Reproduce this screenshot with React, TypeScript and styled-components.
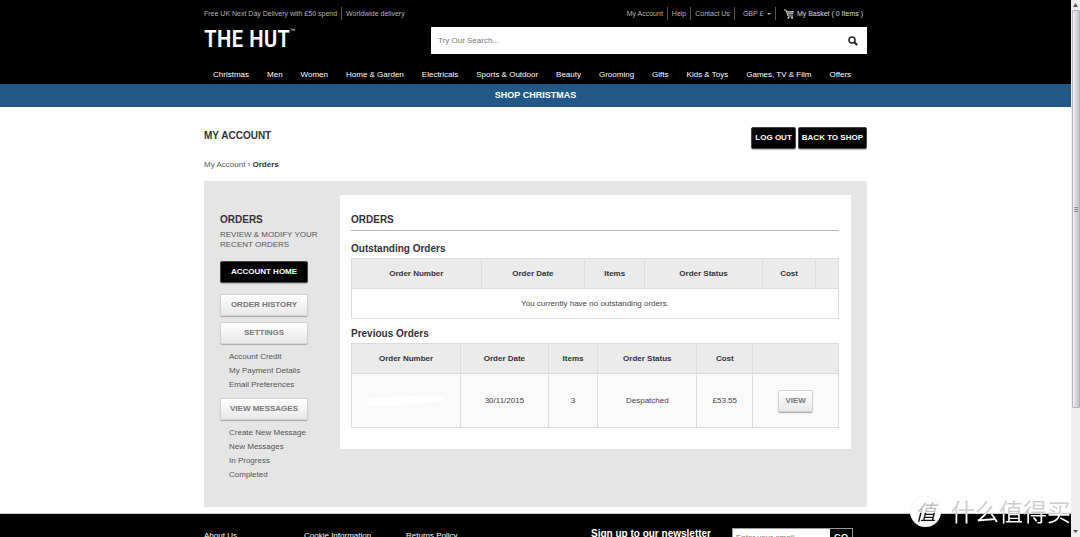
import React from "react";
import styled, { createGlobalStyle, css } from "styled-components";

const GlobalStyle = createGlobalStyle`
  * { box-sizing: border-box; }
  body {
    margin: 0;
    background: #fff;
    color: #333;
    font: 8px/12px "Liberation Sans", "Noto Sans CJK SC", sans-serif;
  }
  a { color: inherit; text-decoration: none; }
  h1, h2, h3, p, ul { margin: 0; padding: 0; }
  ul { list-style: none; }
  button, input, select { font-family: inherit; }
`;

const Viewport = styled.div`
  position: relative;
  display: flex;
  height: 100vh;
  overflow: hidden;
`;

const Page = styled.div`
  flex: 1;
  min-width: 0;
`;

const Container = styled.div`
  width: 100%;
  max-width: 663px;
  margin: 0 auto;
`;

const Header = styled.header`
  background: #000;
  padding-top: 7px;
`;

const TopBar = styled.div`
  display: flex;
  justify-content: space-between;
  height: 13px;
  color: #b4b4b4;
  font-size: 7px;
  line-height: 13px;
`;

const TopGroup = styled.div`
  display: flex;
  white-space: nowrap;
`;

const TopItem = styled.div<{ $inset?: boolean }>`
  display: flex;
  align-items: center;
  gap: 3px;
  padding: 0 4px;
  & + & { border-left: 1px solid #555; }
  &:first-child { padding-left: 0; }
  ${(p) => p.$inset && css`padding-left: 8px;`}
`;

const Currency = styled.select`
  appearance: none;
  border: 0;
  padding: 0;
  width: 21px;
  background: transparent;
  color: inherit;
  font-size: 7px;
  line-height: 13px;
`;

const BasketLink = styled.a`
  color: #ddd;
`;

const BrandRow = styled.div`
  display: flex;
  justify-content: space-between;
  margin-top: 7px;
  height: 27px;
`;

const Logo = styled.a`
  display: flex;
  color: #fff;
  font: 500 24px/25px "Roboto Condensed", "Open Sans Condensed", "Liberation Sans Narrow", "Liberation Sans", sans-serif;
  white-space: nowrap;
  sup { font: 5px/6px "Liberation Sans", sans-serif; }
`;

const Search = styled.form`
  display: flex;
  width: 436px;
  background: #fff;
`;

const SearchInput = styled.input`
  flex: 1;
  min-width: 0;
  border: 0;
  padding: 0 7px;
  background: transparent;
  font-size: 8px;
  outline: 0;
  &::placeholder { color: #757575; }
`;

const SearchButton = styled.button`
  display: flex;
  align-items: center;
  border: 0;
  padding: 0 9px;
  background: transparent;
`;

const Nav = styled.nav`
  display: flex;
  padding-top: 12px;
  color: #fff;
  line-height: 18px;
  white-space: nowrap;
  a { padding: 0 9px; }
`;

const Promo = styled.a`
  display: block;
  background: #225886;
  color: #fff !important;
  font-size: 9px;
  font-weight: bold;
  line-height: 23px;
  text-align: center;
`;

const TitleRow = styled.div`
  display: flex;
  align-items: flex-start;
  justify-content: space-between;
  padding-top: 20px;
`;

const Title = styled.h1`
  font-size: 10px;
  line-height: 18px;
`;

const Actions = styled.div`
  display: flex;
  gap: 2px;
`;

const Button = styled.button<{ $dark?: boolean; $wide?: boolean }>`
  width: ${(p) => (p.$wide ? "88px" : "auto")};
  height: 22px;
  border: 1px solid ${(p) => (p.$dark ? "#444" : "#d2d2d2")};
  border-radius: 2px;
  padding: 0 ${(p) => (p.$dark ? "3px" : "6px")};
  background: ${(p) => (p.$dark ? "#000" : "linear-gradient(#fdfdfd, #e9e9e9)")};
  box-shadow: 0 1px 1px ${(p) => (p.$dark ? "#bbb" : "#aaa")};
  color: ${(p) => (p.$dark ? "#fff" : "#777")};
  font-size: 8px;
  font-weight: bold;
  line-height: 12px;
  white-space: nowrap;
`;

const Breadcrumb = styled.nav`
  margin: 10px 0;
  color: #555;
  strong { color: #333; }
`;

const Panel = styled.main`
  display: grid;
  grid-template-columns: 136px 1fr;
  align-items: start;
  padding: 14px 16px 25px 0;
  background: #e5e5e5;
`;

const Sidebar = styled.aside`
  display: flex;
  flex-direction: column;
  align-items: flex-start;
  gap: 6px;
  padding: 17px 16px 0;
`;

const Heading = styled.h2`
  font-size: 10px;
  line-height: 16px;
`;

const Intro = styled.div`
  margin-bottom: 5px;
  p {
    padding: 2px 0 0;
    color: #555;
    line-height: 10px;
  }
`;

const HomeSlot = styled.div`
  margin-bottom: 5px;
`;

const SideLinks = styled.ul`
  padding-left: 9px;
  color: #555;
  line-height: 14px;
`;

const Card = styled.section`
  padding: 17px 12px 21px 11px;
  background: #fff;
`;

const CardTitle = styled(Heading)`
  padding-bottom: 2px;
  margin-bottom: 10px;
  border-bottom: 1px solid #b8b8b8;
`;

const TableTitle = styled.h3`
  margin-bottom: 1px;
  font-size: 10px;
  line-height: 16px;
`;

const Table = styled.table<{ $tall?: boolean }>`
  width: 100%;
  border-collapse: collapse;
  table-layout: fixed;
  text-align: center;
  & + h3 { margin-top: 7px; }
  th, td {
    border: 1px solid #dcdcdc;
    padding: 0;
  }
  th {
    height: 30px;
    background: #ebebeb;
  }
  td {
    height: ${(p) => (p.$tall ? "54px" : "30px")};
    background: ${(p) => (p.$tall ? "#fafafa" : "#fff")};
    color: #444;
  }
`;

const Redaction = styled.svg`
  display: block;
  margin: 0 auto;
`;

const Footer = styled.footer`
  margin-top: 6px;
  border-top: 1px solid #ccc;
  background: #000;
  color: #fff;
`;

const FooterRow = styled(Container)`
  display: grid;
  grid-template-columns: 100px 102px 185px 1fr;
  height: 100px;
  padding-top: 14px;
  a { line-height: 16px; }
`;

const Newsletter = styled.form`
  display: flex;
  align-items: flex-start;
  justify-content: space-between;
  padding-right: 14px;
  label {
    font-size: 10px;
    font-weight: bold;
    line-height: 12px;
    white-space: nowrap;
  }
`;

const EmailBox = styled.div`
  display: flex;
  width: 121px;
  height: 18px;
  border: 1px solid #999;
  input {
    flex: 1;
    min-width: 0;
    border: 0;
    padding: 0 3px;
    font-size: 8px;
  }
  button {
    width: 22px;
    border: 0;
    padding: 0;
    background: #000;
    color: #fff;
    font-size: 9px;
    font-weight: bold;
  }
`;

const Scrollbar = styled.div`
  display: flex;
  flex-direction: column;
  justify-content: space-between;
  align-items: center;
  width: 9px;
  padding: 3px 0;
  background: #eee;
`;

const Thumb = styled.div`
  display: flex;
  align-items: center;
  justify-content: center;
  width: 8px;
  height: 75%;
  margin-bottom: auto;
  margin-top: 3px;
  border: 1px solid #b4b4b4;
  border-radius: 1px;
  background: linear-gradient(90deg, #f4f4f6, #d2d2d8 60%, #c4c4cc);
`;

const Watermark = styled.div`
  position: absolute;
  right: 9px;
  bottom: 10px;
  display: flex;
  align-items: center;
  gap: 10px;
  height: 32px;
`;

const WatermarkText = styled.span`
  background: linear-gradient(#cdcdcd 58%, #fff 58%);
  background-clip: text;
  color: transparent;
  font: 24px/32px "Noto Sans CJK SC", sans-serif;
`;

const WatermarkBadge = styled.span`
  width: 31px;
  height: 31px;
  border-radius: 50%;
  background: #fff;
  box-shadow: inset 0 0 1px #ccc;
  text-align: center;
  span {
    display: block;
    background: linear-gradient(#bbb 58%, #111 58%);
    background-clip: text;
    color: transparent;
    font: italic 21px/30px "Noto Sans CJK SC", sans-serif;
  }
`;

const navItems = [
  "Christmas", "Men", "Women", "Home & Garden", "Electricals", "Sports & Outdoor",
  "Beauty", "Grooming", "Gifts", "Kids & Toys", "Games, TV & Film", "Offers",
];
const columns = ["Order Number", "Order Date", "Items", "Order Status", "Cost", ""];

function TableHead({ widths }: { widths: number[] }) {
  return (
    <>
      <colgroup>
        {widths.map((w, i) => <col key={i} width={`${w}%`} />)}
      </colgroup>
      <thead>
        <tr>{columns.map((c) => <th key={c} scope="col">{c}</th>)}</tr>
      </thead>
    </>
  );
}

function Links({ items }: { items: string[] }) {
  return (
    <SideLinks>
      {items.map((t) => <li key={t}><a href="#">{t}</a></li>)}
    </SideLinks>
  );
}

export default function App() {
  return (
    <Viewport>
      <GlobalStyle />
      <Page>
        <Header>
          <Container>
            <TopBar>
              <TopGroup>
                <TopItem>Free UK Next Day Delivery with £50 spend</TopItem>
                <TopItem>Worldwide delivery</TopItem>
              </TopGroup>
              <TopGroup>
                <TopItem><a href="#">My Account</a></TopItem>
                <TopItem><a href="#">Help</a></TopItem>
                <TopItem><a href="#">Contact Us</a></TopItem>
                <TopItem $inset>
                  <Currency aria-label="Currency"><option>GBP £</option></Currency>
                  <svg width="4" height="3" viewBox="0 0 4 3" aria-hidden="true">
                    <path d="M0 1h4L2 3z" fill="#b4b4b4" />
                  </svg>
                </TopItem>
                <TopItem $inset>
                  <svg width="10" height="10" viewBox="0 0 10 10" fill="none" aria-hidden="true">
                    <path d="M0 1h2l2 6h5" stroke="#ddd" />
                    <path d="M2.5 2H10L8.5 5.5H3.8z" fill="#bbb" />
                    <path d="M3 3.5h6M5 2v3.5M7 2v3.5" stroke="#333" strokeWidth=".4" />
                    <circle cx="4.5" cy="8.7" r="1" fill="#ddd" />
                    <circle cx="8" cy="8.7" r="1" fill="#ddd" />
                  </svg>
                  <BasketLink href="#">My Basket ( 0 Items )</BasketLink>
                </TopItem>
              </TopGroup>
            </TopBar>
            <BrandRow>
              <Logo href="#">THE HUT<sup>™</sup></Logo>
              <Search>
                <SearchInput aria-label="Search" placeholder="Try Our Search..." />
                <SearchButton type="button" aria-label="Submit search">
                  <svg width="10" height="10" viewBox="0 0 10 10" fill="none" stroke="#222">
                    <circle cx="4" cy="4" r="3" strokeWidth="1.5" />
                    <path d="M6 6l3.2 3" strokeWidth="2" />
                  </svg>
                </SearchButton>
              </Search>
            </BrandRow>
            <Nav>{navItems.map((t) => <a key={t} href="#">{t}</a>)}</Nav>
          </Container>
        </Header>
        <Promo href="#">SHOP CHRISTMAS</Promo>
        <Container>
          <TitleRow>
            <Title>MY ACCOUNT</Title>
            <Actions>
              <Button $dark>LOG OUT</Button>
              <Button $dark>BACK TO SHOP</Button>
            </Actions>
          </TitleRow>
          <Breadcrumb aria-label="Breadcrumb">
            <a href="#">My Account</a> › <strong>Orders</strong>
          </Breadcrumb>
          <Panel>
            <Sidebar>
              <Intro>
                <Heading>ORDERS</Heading>
                <p>REVIEW &amp; MODIFY YOUR RECENT ORDERS</p>
              </Intro>
              <HomeSlot><Button $dark $wide>ACCOUNT HOME</Button></HomeSlot>
              <Button $wide>ORDER HISTORY</Button>
              <Button $wide>SETTINGS</Button>
              <Links items={["Account Credit", "My Payment Details", "Email Preferences"]} />
              <Button $wide>VIEW MESSAGES</Button>
              <Links items={["Create New Message", "New Messages", "In Progress", "Completed"]} />
            </Sidebar>
            <Card>
              <CardTitle>ORDERS</CardTitle>
              <TableTitle>Outstanding Orders</TableTitle>
              <Table>
                <TableHead widths={[26.6, 21.3, 12.3, 24.2, 10.9, 4.7]} />
                <tbody>
                  <tr><td colSpan={6}>You currently have no outstanding orders.</td></tr>
                </tbody>
              </Table>
              <TableTitle>Previous Orders</TableTitle>
              <Table $tall>
                <TableHead widths={[22.4, 18, 10.2, 20.3, 11.5, 17.6]} />
                <tbody>
                  <tr>
                    <td>
                      <Redaction width="82" height="14" viewBox="0 0 82 14" aria-hidden="true">
                        <path d="M2 5l12-1 14-1 20-1 30 1 3 3-12 2-18 2-14 1-18 2-3-2-13 1z" fill="#fff" />
                      </Redaction>
                    </td>
                    <td>30/11/2015</td>
                    <td>3</td>
                    <td>Despatched</td>
                    <td>£53.55</td>
                    <td><Button>VIEW</Button></td>
                  </tr>
                </tbody>
              </Table>
            </Card>
          </Panel>
        </Container>
        <Footer>
          <FooterRow>
            <a href="#">About Us</a>
            <a href="#">Cookie Information</a>
            <a href="#">Returns Policy</a>
            <Newsletter>
              <label htmlFor="email">Sign up to our newsletter</label>
              <EmailBox>
                <input id="email" type="email" placeholder="Enter your email" />
                <button type="button">GO</button>
              </EmailBox>
            </Newsletter>
          </FooterRow>
        </Footer>
      </Page>
      <Scrollbar aria-hidden="true">
        <svg width="5" height="4" viewBox="0 0 5 4"><path d="M0 4L2.5 0 5 4z" fill="#555" /></svg>
        <Thumb>
          <svg width="4" height="5" viewBox="0 0 4 5"><path d="M0 .5h4M0 2.5h4M0 4.5h4" stroke="#888" /></svg>
        </Thumb>
        <svg width="5" height="4" viewBox="0 0 5 4"><path d="M0 0h5L2.5 3z" fill="#555" /></svg>
      </Scrollbar>
      <Watermark>
        <WatermarkBadge><span>值</span></WatermarkBadge>
        <WatermarkText>什么值得买</WatermarkText>
      </Watermark>
    </Viewport>
  );
}
